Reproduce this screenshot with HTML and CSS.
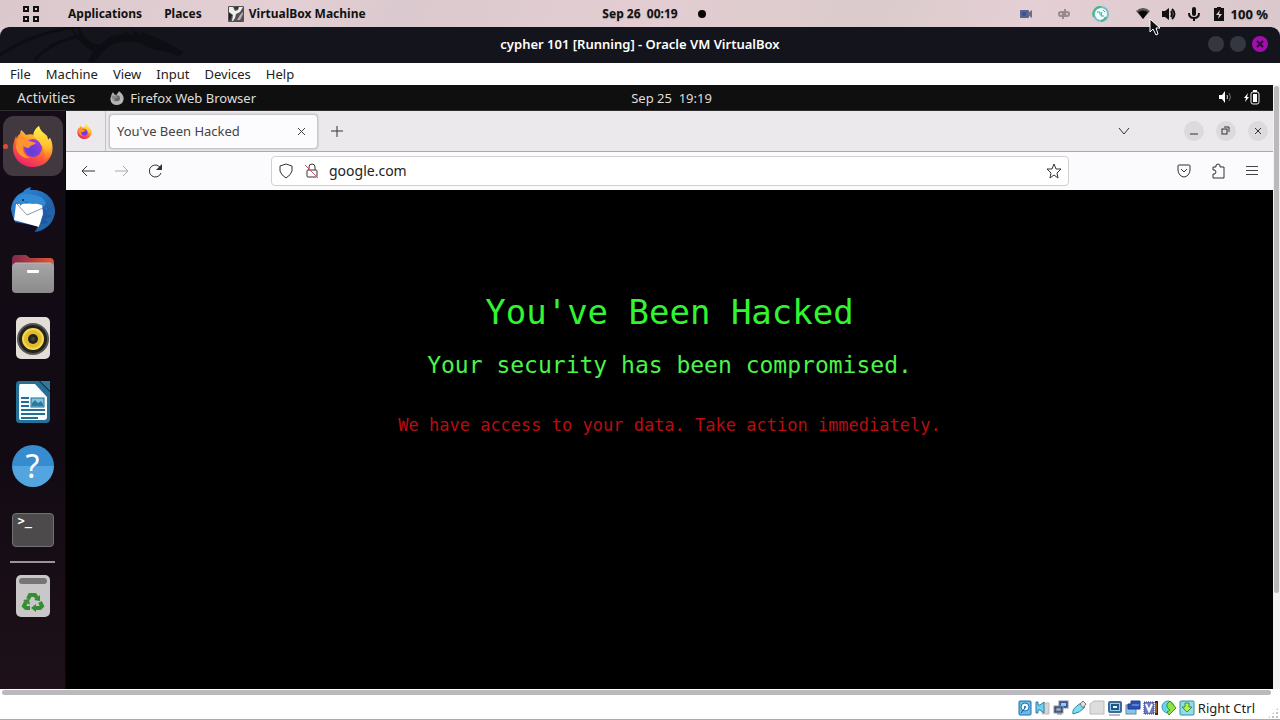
FILE: index.html
```html
<!DOCTYPE html>
<html lang="en">
<head>
<meta charset="utf-8">
<meta name="viewport" content="width=device-width, initial-scale=1">
<title>cypher 101 [Running] - Oracle VM VirtualBox</title>
<link rel="stylesheet" href="styles.css">
</head>
<body>
<svg class="defs" aria-hidden="true">
  <defs>
    <linearGradient id="fox-flame" x1="0.8" y1="0" x2="0.3" y2="1"><stop offset="0" stop-color="#fff04a"/><stop offset="0.35" stop-color="#ffae28"/><stop offset="0.65" stop-color="#ff5a36"/><stop offset="1" stop-color="#e91f72"/></linearGradient>
    <linearGradient id="fox-tail" x1="0.5" y1="0" x2="0.5" y2="1"><stop offset="0" stop-color="#fff04f"/><stop offset="0.6" stop-color="#ffc02e"/><stop offset="1" stop-color="#ff7a31" stop-opacity="0.3"/></linearGradient>
    <radialGradient id="fox-globe" cx="0.4" cy="0.7" r="0.7"><stop offset="0" stop-color="#5a3fd8"/><stop offset="1" stop-color="#9a3bd9"/></radialGradient>
    <linearGradient id="bird" x1="0" y1="0" x2="1" y2="1"><stop offset="0" stop-color="#2f8fe0"/><stop offset="0.5" stop-color="#236dbb"/><stop offset="1" stop-color="#163f8c"/></linearGradient>
    <linearGradient id="folder-back"><stop offset="0" stop-color="#80284f"/><stop offset="1" stop-color="#e2582f"/></linearGradient>
    <linearGradient id="folder-front" x2="0" y2="1"><stop offset="0" stop-color="#a5a5a5"/><stop offset="1" stop-color="#8b8b8b"/></linearGradient>
    <symbol id="firefox" viewBox="0 0 42 42">
      <path d="M8 9 L9 5 C12 7 13 9 14 10 C17 9 20 9 22 10 C22 6 24 3 27 1 C28 6 31 7 35 11 L36 15 L38 13 C41 18 41 24 40 28 C37 37 30 42 21 42 C10 42 1 34 1 23 C1 18 3 14 4 11 L5 14 C5 12 6 10 8 9Z" fill="url(#fox-flame)"/>
      <circle cx="21" cy="23" r="9" fill="url(#fox-globe)"/>
      <path d="M5 14 C9 13 13 14 17 16 C20 17 22 17 24 18 C22 20 18 20 17 23 C14 23 12 22 11 20 C10 26 13 31 18 33 C11 34 5 29 4 22Z" fill="#ff9430"/>
      <path d="M22 11 C20 8 24 3 27 1 C28 6 31 7 35 11 L36 15 L38 13 C42 22 39 31 32 35 C33 31 33 23 29 20 C28 16 24 15 22 11Z" fill="url(#fox-tail)"/>
    </symbol>
  </defs>
</svg>

<div class="desktop">
  <header class="panel">
    <nav class="panel-left">
      <button class="grid-button" aria-label="Show applications"><svg width="18" height="18" viewBox="0 0 18 18" fill="none" stroke="#111" stroke-width="2"><rect x="2" y="2" width="4" height="4"/><rect x="12" y="2" width="4" height="4"/><rect x="2" y="12" width="4" height="4"/><rect x="12" y="12" width="4" height="4"/></svg></button>
      <button>Applications</button>
      <button class="places">Places</button>
      <button class="with-icon"><svg width="16" height="16" viewBox="0 0 16 16"><rect width="16" height="16" rx="1" fill="#555152"/><path d="M1 1H5L7 5L10 4L11 1H15L12 6L8 8L7 12L5 15H4L5 9L1 6Z" fill="#eee"/><path d="M9 14L12 9L15 6V8L12 14Z" fill="#b5b2b2"/><path d="M1 7L4 9L2 14H1Z" fill="#222"/><path d="M7 1H10V3H7Z" fill="#333"/></svg>VirtualBox Machine</button>
    </nav>
    <time class="panel-clock">Sep 26&nbsp; 00:19</time>
    <div class="panel-right">
      <span class="dot"></span>
      <svg width="14" height="12" viewBox="0 0 14 12"><rect x="1" y="2" width="9" height="8" rx="1" fill="#56658d"/><circle cx="5" cy="6" r="2" fill="#354d9c"/><path d="M9 5L13 2V10L9 7Z" fill="#746c80"/></svg>
      <svg class="tray-qb" width="14" height="14" viewBox="0 0 14 14" fill="none" stroke="#98898e" stroke-width="2"><circle cx="4" cy="7" r="2"/><path d="M6 4V12M8 2V10"/><circle cx="10" cy="7" r="2"/></svg>
      <svg class="tray-sync" width="18" height="18" viewBox="0 0 18 18"><circle cx="9" cy="9" r="8" fill="#7dbbd0"/><circle cx="9" cy="9" r="6" fill="#f4fffd"/><path d="M2 12A7 7 0 0 1 9 2M9 16A7 7 0 0 0 14 12" fill="none" stroke="#43b985" stroke-width="2"/><path d="M5 7H8V10M10 7L9 11H12M11 5L13 7" fill="none" stroke="#3aa99e"/></svg>
      <span class="wifi"><svg width="14" height="12" viewBox="0 0 14 12"><path d="M0 3Q7-3 14 3L7 11Z" fill="#5c5458"/><path d="M2 4Q7 1 12 4L7 11Z" fill="#080808"/></svg>
        <svg class="pointer" width="13" height="18" viewBox="0 0 13 18"><path d="M1 1V14L4 11L7 17L9 16L7 10H11Z" fill="#111" stroke="#fff"/></svg></span>
      <svg width="14" height="14" viewBox="0 0 14 14"><path d="M0 4H3L7 1V13L3 10H0Z" fill="#111"/><path d="M9 4Q11 7 9 10M10 2Q15 7 10 12" fill="none" stroke="#111" stroke-width="2"/></svg>
      <svg class="mic" width="12" height="14" viewBox="0 0 12 14"><rect x="4" width="4" height="9" rx="2" fill="#111"/><path d="M1 6Q1 11 6 11Q11 11 11 6M6 11V14" fill="none" stroke="#111" stroke-width="2"/></svg>
      <svg class="host-battery" width="10" height="14" viewBox="0 0 10 14"><path d="M3 0H7V1H10V14H0V1H3Z" fill="#111"/><path d="M6 3L2 8H5L4 12L8 7H5Z" fill="#e5d1d5"/></svg>
      <span class="charge">100 %</span>
    </div>
  </header>

  <main class="window">
    <div class="titlebar">
      <svg class="dragon" width="190" height="35" viewBox="0 0 190 35" fill="none"><path d="M0 28Q35 5 77 0M34 34Q52 13 82 9M78 0Q82 13 97 21L90 35" stroke="#0d0e14" stroke-width="3"/><path d="M70 0Q88 20 101 17Q114 4 127 9L122 4L134 8L131 3L143 8L140 4L160 12L184 25L179 29L164 24Q149 23 141 16Q116 11 104 24L94 35H88L93 24Q77 16 70 0Z" fill="#0c0e13"/></svg>
      <h1>cypher 101 [Running] - Oracle VM VirtualBox</h1>
      <div class="title-buttons"><button aria-label="Minimize"></button><button aria-label="Maximize"></button><button class="close" aria-label="Close"><svg width="8" height="8" viewBox="0 0 8 8" stroke="#2b062f" stroke-width="2"><path d="M1 1L7 7M7 1L1 7"/></svg></button></div>
    </div>
    <nav class="menubar"><button>File</button><button>Machine</button><button>View</button><button>Input</button><button>Devices</button><button>Help</button></nav>

    <div class="viewport">
      <div class="guest">
        <div class="guest-bar">
          <div class="guest-left"><button class="activities">Activities</button><button class="guest-app"><svg width="14" height="14" viewBox="0 0 42 42"><path d="M5 10L9 4L14 11H20L27 1Q42 11 41 25Q38 42 21 42Q3 42 1 24Z" fill="#b5b5b5"/><circle cx="21" cy="22" r="9" fill="#666"/><path d="M5 13L20 15L24 20L15 22Q13 31 20 34Q5 31 5 13Z" fill="#898989"/></svg>Firefox Web Browser</button></div>
          <time>Sep 25&nbsp; 19:19</time>
          <div class="guest-right">
            <svg width="14" height="14" viewBox="0 0 14 14"><path d="M1 5H4L7 1V13L4 9H1Z" fill="#fff"/><path d="M9 5Q10 7 9 9" stroke="#ddd" fill="none"/><path d="M11 3Q14 7 11 11" stroke="#777" fill="none"/></svg>
            <svg width="16" height="15" viewBox="0 0 16 15"><path d="M4 3L0 8H2L1 12L5 7H3Z" fill="#fff"/><rect x="7" y="2" width="8" height="12" rx="2" fill="none" stroke="#eee"/><rect x="9" y="4" width="4" height="8" fill="#fff"/><path d="M9 1H13" stroke="#fff" stroke-width="2"/></svg>
          </div>
        </div>
        <div class="guest-body">
          <aside class="dock">
            <button class="active" aria-label="Firefox"><svg width="42" height="42"><use href="#firefox"/></svg></button>
            <button aria-label="Thunderbird"><svg width="46" height="46" viewBox="0 0 46 46"><circle cx="23" cy="24" r="21" fill="url(#bird)"/><path d="M1 22C2 12 8 7 13 5C15 2 18 1 21 0L20 3C35 2 45 12 45 24C44 36 36 43 25 45L28 41L20 43L22 39C10 39 2 32 1 22Z" fill="url(#bird)"/><path d="M5 35L28 39L24 46H12Z" fill="#120b1d"/><path d="M6 17L32 16L33 27L29 40L4 33Z" fill="#fff"/><path d="M7 17L17 28L33 21" fill="none" stroke="#8b99a8"/><path d="M3 17C6 9 14 5 23 8C32 8 37 14 37 23C34 18 28 16 22 17L16 14L10 19L9 14Z" fill="#348bd5"/><path d="M32 22L43 20L36 27L42 29L34 32L38 36L30 37L27 44C37 43 45 34 45 23L40 11Z" fill="#2465aa"/><circle cx="13" cy="13" r="1" fill="#10243f"/></svg></button>
            <button aria-label="Files"><svg width="42" height="40" viewBox="0 0 42 40"><path d="M0 6Q0 1 4 1H14L18 4H38Q42 4 42 9V20H0Z" fill="url(#folder-back)"/><rect y="9" width="42" height="30" rx="4" fill="url(#folder-front)"/><path d="M3 9H39" stroke="#c0b7b7"/><rect x="15" y="16" width="12" height="3" rx="1" fill="#fff"/></svg></button>
            <button aria-label="Rhythmbox"><svg width="36" height="42" viewBox="0 0 36 42"><rect x="1" width="34" height="42" rx="5" fill="#e3ddd8"/><circle cx="18" cy="22" r="16" fill="#555"/><circle cx="18" cy="22" r="14" fill="#24221c"/><circle cx="18" cy="22" r="10" fill="#e2ba2d" stroke="#f4da51" stroke-width="2"/><circle cx="18" cy="22" r="5" fill="#25231f"/><circle cx="18" cy="22" r="2" fill="#46433b"/></svg></button>
            <button aria-label="LibreOffice Writer"><svg width="36" height="42" viewBox="0 0 36 42"><path d="M4 0H24L35 11V38Q35 42 31 42H4Q1 42 1 38V4Q1 0 4 0Z" fill="#266f96"/><path d="M5 3H20L32 16V36Q32 39 29 39H5Q4 39 4 36V6Q4 3 5 3Z" fill="#f7fcff"/><path d="M25 0H35V10Z" fill="#34789b"/><path d="M6 17H14M6 21H14M6 25H14M6 29H30M6 33H30M6 37H23" stroke="#236e92" stroke-width="2"/><rect x="16" y="17" width="13" height="9" fill="#86c2dc" stroke="#236e92"/><path d="M17 25V22L20 19L23 22L26 20L28 23V25Z" fill="#287ba5"/></svg></button>
            <button aria-label="Help"><span class="help">?</span></button>
            <button aria-label="Terminal"><span class="terminal">&gt;_</span></button>
            <hr>
            <button class="trash" aria-label="Trash"><svg width="34" height="42" viewBox="0 0 34 42"><rect width="34" height="42" rx="5" fill="#c9c7c7"/><rect x="3" y="3" width="28" height="6" rx="3" fill="#777475"/><g fill="none" stroke="#348e31" stroke-width="4"><path d="M12 24L14 20H19L21 23M24 27L26 31L24 33H19M14 33H10L8 31L10 27"/></g><path d="M24 20V26L18 25ZM20 29V37L15 33ZM7 25L13 24L14 30Z" fill="#348e31"/></svg></button>
          </aside>

          <section class="browser">
            <div class="tabs">
              <button class="pinned" aria-label="Firefox View"><svg width="15" height="15"><use href="#firefox"/></svg></button>
              <div class="tab"><span>You've Been Hacked</span><button aria-label="Close tab"><svg width="9" height="9" viewBox="0 0 9 9" stroke="#444"><path d="M1 1L8 8M8 1L1 8"/></svg></button></div>
              <button class="new-tab" aria-label="New tab"><svg width="12" height="12" viewBox="0 0 12 12" stroke="#333"><path d="M6 1V12M0 6H12"/></svg></button>
              <button class="all-tabs" aria-label="List all tabs"><svg width="12" height="8" viewBox="0 0 12 8" fill="none" stroke="#333"><path d="M1 1L6 7L11 1"/></svg></button>
              <div class="window-controls">
                <button aria-label="Minimize"><svg width="10" height="10" viewBox="0 0 10 10" stroke="#333"><path d="M1 8H9"/></svg></button>
                <button aria-label="Restore"><svg width="10" height="10" viewBox="0 0 10 10" fill="none" stroke="#333"><rect x="1" y="3" width="5" height="5"/><path d="M3 1H8V6"/></svg></button>
                <button aria-label="Close"><svg width="8" height="8" viewBox="0 0 8 8" stroke="#333"><path d="M1 1L7 7M7 1L1 7"/></svg></button>
              </div>
            </div>
            <div class="toolbar">
              <div class="tools">
                <button aria-label="Back"><svg width="14" height="14" viewBox="0 0 14 14" fill="none" stroke="#333"><path d="M14 7H1M6 2L1 7L6 12"/></svg></button>
                <button aria-label="Forward" disabled><svg width="14" height="14" viewBox="0 0 14 14" fill="none" stroke="#aaa"><path d="M0 7H13M8 2L13 7L8 12"/></svg></button>
                <button aria-label="Reload"><svg width="14" height="14" viewBox="0 0 14 14" fill="none" stroke="#333"><path d="M12 9A6 6 0 1 1 12 5"/><path d="M13 0V6H7Z" fill="#333" stroke="none"/></svg></button>
              </div>
              <div class="address">
                <svg width="14" height="16" viewBox="0 0 14 16" fill="none" stroke="#333"><path d="M7 1L13 3V8Q12 12 7 15Q2 12 1 8V3Z"/></svg>
                <svg width="14" height="16" viewBox="0 0 14 16" fill="none" stroke="#333"><rect x="2" y="7" width="10" height="7" rx="1"/><path d="M4 7V4Q4 1 7 1Q10 1 10 4V7"/><path d="M0 2L13 15" stroke="#c9556b"/></svg>
                <input type="text" aria-label="Address" value="google.com">
                <button aria-label="Bookmark"><svg width="16" height="16" viewBox="0 0 16 16" fill="none" stroke="#333"><path d="M8 1L10 6L15 6L11 10L12 15L8 12L4 15L5 10L1 6L6 6Z"/></svg></button>
              </div>
              <div class="tools">
                <button aria-label="Pocket"><svg width="14" height="14" viewBox="0 0 14 14" fill="none" stroke="#333"><path d="M1 2Q1 1 2 1H12Q13 1 13 2V6Q13 9 11 11Q9 13 7 13Q5 13 3 11Q1 9 1 6ZM4 5L7 8L10 5"/></svg></button>
                <button aria-label="Extensions"><svg width="14" height="16" viewBox="0 0 14 16" fill="none" stroke="#333"><path d="M2 4H5V2Q7 0 9 2V4H13V15H2V11H4Q6 9 4 7H2Z"/></svg></button>
                <button aria-label="Menu"><svg width="12" height="12" viewBox="0 0 12 12" fill="#444"><path d="M0 1H12V2H0ZM0 5H12V6H0ZM0 9H12V10H0Z"/></svg></button>
              </div>
            </div>
            <article class="page"><h2>You've Been Hacked</h2><p class="lead">Your security has been compromised.</p><p class="warning">We have access to your data. Take action immediately.</p></article>
          </section>
        </div>
      </div>
      <div class="scroll-v"><span></span></div>
      <div class="scroll-h"><span></span></div>
    </div>

    <footer class="status">
      <svg viewBox="0 0 16 16"><rect x="2" y="1" width="12" height="14" rx="1" fill="#65bde8" stroke="#246cab"/><circle cx="8" cy="7" r="4" fill="#eaf8ff" stroke="#2970ae"/><circle cx="8" cy="7" r="1" fill="#164f88"/><path d="M4 13L8 8" stroke="#164f88"/></svg>
      <svg viewBox="0 0 16 16"><path d="M8 3H14V14H7Z" fill="#d4d4d4" stroke="#bbb"/><path d="M1 2H3V5H5L9 2V13L5 10H3V13H1Z" fill="#68d3ef" stroke="#3b79a2"/></svg>
      <svg viewBox="0 0 16 16"><rect x="6" y="1" width="9" height="7" fill="#314f9c" stroke="#888"/><path d="M8 3H13V6H8Z" fill="#87d8f3"/><rect x="1" y="6" width="9" height="7" fill="#263f8e" stroke="#999"/><path d="M3 8H8V11H3ZM4 14H9" fill="#75c5ed" stroke="#777"/></svg>
      <svg viewBox="0 0 16 16"><path d="M2 14Q0 9 10 3L14 7Q9 13 2 14Z" fill="#78e0ef" stroke="#3e83a5"/><path d="M9 4L12 1L15 4L12 8Z" fill="#ddd" stroke="#777"/></svg>
      <svg viewBox="0 0 16 16"><path d="M1 4L5 1H15V14H1Z" fill="#ddd" stroke="#bbb"/></svg>
      <svg viewBox="0 0 16 16"><rect x="2" y="2" width="12" height="10" rx="1" fill="#8dd3ee" stroke="#42679b" stroke-width="2"/><rect x="5" y="5" width="6" height="4" fill="#e7f9ff" stroke="#235488" stroke-width="2"/><path d="M2 15H13" stroke="#777"/></svg>
      <svg viewBox="0 0 16 16"><rect x="1" y="5" width="10" height="9" fill="#80c6ed" stroke="#7a819b"/><path d="M6 1H15V9H3V4H6Z" fill="#294eb5" stroke="#253d85"/><path d="M7 5H14" stroke="#78bbec"/></svg>
      <svg viewBox="0 0 16 16"><rect x="1" y="2" width="10" height="12" fill="#6c7ac4" stroke="#30357e" stroke-dasharray="1 1"/><path d="M3 4L6 11L9 4" fill="none" stroke="#fff" stroke-width="2"/><rect x="12" y="1" width="3" height="14" fill="#571b1a"/><path d="M13 3V13" stroke="#d1ae29"/></svg>
      <svg viewBox="0 0 16 16"><circle cx="7" cy="7" r="6" fill="#65d6ed" stroke="#4495ad"/><path d="M6 4L9 1L15 8L8 15L6 12L9 10L6 7Z" fill="#8de53d" stroke="#41902f"/></svg>
      <svg viewBox="0 0 16 16"><rect x="1" y="1" width="14" height="14" rx="1" fill="#8dddeb" stroke="#3d88a4"/><path d="M6 3H10V7H13L8 12L3 7H6Z" fill="#b7f254" stroke="#438d32"/></svg>
      <span>Right Ctrl</span>
      <i class="grip"></i>
    </footer>
  </main>
</div>
</body>
</html>
```
FILE: styles.css
```css
* { box-sizing: border-box; }
html, body { height: 100%; }
body { margin: 0; font-family: "Noto Sans", "Open Sans", sans-serif; font-size: 13px; line-height: 18px; overflow: hidden; }
button { padding: 0; border: 0; background: none; color: inherit; font: inherit; display: flex; align-items: center; justify-content: center; white-space: nowrap; }
svg { display: block; flex: none; }
h1, h2, p { margin: 0; font-weight: 400; }
.defs { position: absolute; width: 0; height: 0; }
.desktop { min-height: 100vh; display: flex; flex-direction: column; background: #dfcbd0; }

.panel { display: grid; grid-template-columns: 1fr auto 1fr; align-items: center; height: 27px; padding-right: 12px; color: #111; font-size: 12px; font-weight: 700; background: linear-gradient(105deg, #dac8cc, #e4d0d4 22%, #dac9ce 31%, #e3cdd2 50%, #dbcbcc 68%, #e4cfd4 80%, #dac8cd); text-shadow: 0 1px 1px #a99ca0; }
.panel-left { display: flex; align-items: center; padding-left: 22px; }
.grid-button { margin-right: 28px; }
.places { margin: 0 26px 0 22px; }
.with-icon { gap: 5px; }
.panel-clock { padding-left: 12px; }
.panel-right { display: flex; align-items: center; }
.dot { width: 8px; height: 8px; border-radius: 50%; background: #050505; margin-left: 20px; margin-right: auto; }
.tray-qb { margin-left: 24px; }
.tray-sync { margin-left: 21px; }
.wifi { position: relative; z-index: 2; margin: 0 12px 0 26px; }
.pointer { position: absolute; left: 13px; top: 10px; }
.mic { margin-left: 12px; }
.host-battery { margin: 0 7px 0 14px; }
.charge { font-size: 13px; }

.window { flex: 1; display: flex; flex-direction: column; background: #fff; border-radius: 9px 9px 0 0; border-bottom: 1px solid #aaa; }
.titlebar { position: relative; height: 36px; display: grid; grid-template-columns: 1fr auto 1fr; align-items: center; padding-bottom: 2px; border-radius: 9px 9px 0 0; background: #14151c; color: #fff; overflow: hidden; }
.titlebar h1 { grid-column: 2; font-size: 13px; line-height: 18px; font-weight: 600; }
.dragon { position: absolute; left: 0; top: 0; }
.title-buttons { display: flex; gap: 6px; justify-content: flex-end; padding-right: 12px; }
.title-buttons button { width: 16px; height: 16px; border-radius: 50%; background: #343640; }
.title-buttons .close { background: #a20ead; }
.menubar { display: flex; height: 22px; align-items: center; gap: 15px; padding-left: 10px; color: #222; }

.viewport { flex: 1; display: grid; grid-template-columns: 1fr 7px; grid-template-rows: 1fr 8px; }
.guest { display: flex; flex-direction: column; min-width: 0; background: #000; }
.guest-bar { height: 26px; display: grid; grid-template-columns: 9fr auto 8fr; align-items: center; background: #100f10; color: #ddd; border-bottom: 1px solid #302d30; }
.guest-left { display: flex; gap: 35px; padding-left: 17px; }
.activities { font-size: 14px; }
.guest-app { gap: 6px; }
.guest-right { display: flex; justify-content: flex-end; gap: 12px; padding-right: 13px; }
.guest-body { flex: 1; display: flex; }
.dock { width: 66px; flex: none; display: flex; flex-direction: column; align-items: center; gap: 4px; padding-top: 5px; background: linear-gradient(#140c16, #120a13 60%, #1e1119); border-right: 1px solid #090609; }
.dock button { width: 60px; height: 60px; border-radius: 11px; }
.dock .active { position: relative; background: #423940; }
.dock .active::before { content: ""; position: absolute; left: 0; width: 5px; height: 5px; border-radius: 50%; background: #d65235; }
.dock hr { width: 45px; height: 2px; margin: -3px 0 0; border: 0; background: #9c929c; }
.dock .trash { height: 58px; }
.help { width: 42px; height: 42px; border-radius: 50%; color: #fff; font-size: 32px; line-height: 42px; background: linear-gradient(#378bcf 50%, #52a5df 50%); }
.terminal { width: 42px; height: 34px; padding-left: 5px; border: 1px solid #747174; border-radius: 4px; background: #4c4a4b; color: #fff; text-align: left; font: 700 12px/15px "DejaVu Sans Mono", monospace; }

.browser { flex: 1; min-width: 0; display: flex; flex-direction: column; }
.tabs { height: 41px; display: flex; align-items: center; background: #ebe9eb; border-bottom: 1px solid #aaa8aa; color: #444; }
.pinned { width: 40px; height: 40px; padding-right: 2px; border-right: 1px solid #c4c2c4; }
.tab { width: 209px; height: 35px; display: flex; align-items: center; justify-content: space-between; margin-left: 3px; padding: 0 11px 0 7px; background: #fcfbfd; border: 1px solid #c8c6c9; border-radius: 4px; box-shadow: 0 0 2px #aaa; }
.new-tab { width: 36px; height: 36px; margin-left: 1px; }
.all-tabs { margin: 0 54px 0 auto; }
.window-controls { display: flex; gap: 12px; padding-right: 5px; }
.window-controls button { width: 20px; height: 20px; border-radius: 50%; background: #dcdadc; }
.toolbar { height: 38px; display: flex; align-items: center; gap: 98px; padding: 0 4px 0 5px; background: #fbfafc; }
.tools { display: flex; }
.tools button { width: 34px; height: 34px; }
.address { flex: 1; min-width: 0; height: 30px; display: flex; align-items: center; gap: 12px; padding: 0 6px 0 7px; background: #fff; border: 1px solid #d0cfd1; border-radius: 4px; }
.address input { flex: 1; min-width: 0; padding: 0; margin-left: -2px; border: 0; outline: 0; background: none; color: #222; font: inherit; font-size: 14px; }
.page { flex: 1; display: flex; flex-direction: column; align-items: center; padding-top: 102px; background: #000; color: #32f532; font-family: "DejaVu Sans Mono", monospace; text-align: center; }
.page h2 { font-size: 34px; line-height: 40px; }
.lead { margin-top: 19px; font-size: 23px; line-height: 28px; color: #4af54a; }
.warning { margin-top: 36px; font-size: 17px; line-height: 20px; color: #b90d12; }

.scroll-v { padding: 1px 1px 0; background: #f3f2f3; }
.scroll-v span { display: block; height: 84%; border-radius: 3px; background: #bbb9bb; }
.scroll-h { padding: 1px 2px 2px; background: #fff; }
.scroll-h span { display: block; height: 5px; border-radius: 3px; background: #bbb9bb; }
.status { height: 22px; display: flex; align-items: center; justify-content: flex-end; gap: 2px; padding-right: 1px; color: #222; }
.status svg { width: 16px; height: 16px; }
.status span { margin-left: 1px; }
.grip { align-self: flex-end; width: 12px; height: 12px; margin-left: 10px; background: radial-gradient(circle, #c5c3c5 1px, transparent 1px) 0 0 / 4px 4px; clip-path: polygon(100% 0, 100% 100%, 0 100%); }
```
